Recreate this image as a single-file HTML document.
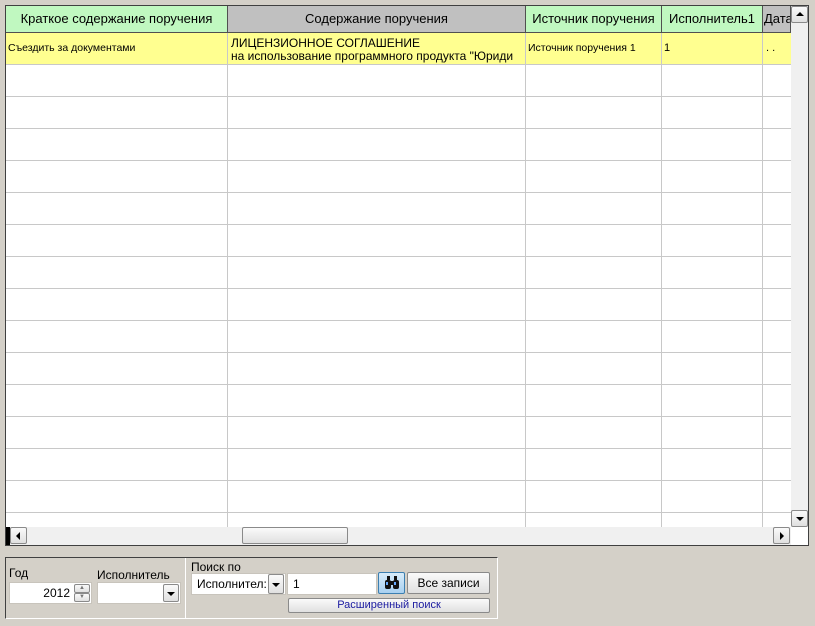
<!DOCTYPE html>
<html><head><meta charset="utf-8"><style>
*{margin:0;padding:0;box-sizing:border-box}
body{width:815px;height:626px;background:#d4d0c8;position:relative;overflow:hidden;font-family:"Liberation Sans",sans-serif;font-size:12px;color:#000}
.a{position:absolute}
.hd{position:absolute;top:6px;height:27px;border-right:1px solid #505050;border-bottom:1px solid #505050;text-align:center;line-height:26px;font-size:13px;white-space:nowrap;overflow:hidden}
.g{background:#c0f8c0}.gr{background:#c0c0c0}
.vl{position:absolute;top:33px;height:494px;width:1px;background:#c8c8c8}
.hl{position:absolute;left:6px;width:785px;height:1px;background:#c8c8c8}
.btn{position:absolute;background:linear-gradient(#fafafa,#e0e0e0);border:1px solid #8a8a8a;border-radius:2px;text-align:center}
.inp{position:absolute;background:#fff;border:1px solid #c8c4bc}
.tri{position:absolute;width:0;height:0}
</style></head><body>
<div class="a" style="left:5px;top:5px;width:804px;height:541px;border:1px solid #404040;background:#fff"></div>
<div class="hd g" style="left:6px;width:222px">Краткое содержание поручения</div>
<div class="hd gr" style="left:228px;width:298px">Содержание поручения</div>
<div class="hd g" style="left:526px;width:136px">Источник поручения</div>
<div class="hd g" style="left:662px;width:101px">Исполнитель1</div>
<div class="hd gr" style="left:763px;width:28px;text-align:left;padding-left:1px">Дата</div>
<div class="a" style="left:6px;top:33px;width:785px;height:31px;background:#ffff90"></div>
<div class="vl" style="left:227px"></div><div class="vl" style="left:525px"></div><div class="vl" style="left:661px"></div><div class="vl" style="left:762px"></div>
<div class="hl" style="top:64px"></div><div class="hl" style="top:96px"></div><div class="hl" style="top:128px"></div><div class="hl" style="top:160px"></div><div class="hl" style="top:192px"></div><div class="hl" style="top:224px"></div><div class="hl" style="top:256px"></div><div class="hl" style="top:288px"></div><div class="hl" style="top:320px"></div><div class="hl" style="top:352px"></div><div class="hl" style="top:384px"></div><div class="hl" style="top:416px"></div><div class="hl" style="top:448px"></div><div class="hl" style="top:480px"></div><div class="hl" style="top:512px"></div>
<div class="a" style="left:8px;top:42px;font-size:10.5px">Съездить за документами</div>
<div class="a" style="left:231px;top:37px;width:293px;height:26px;overflow:hidden;line-height:13px;white-space:nowrap">ЛИЦЕНЗИОННОЕ СОГЛАШЕНИЕ<br>на использование программного продукта "Юриди</div>
<div class="a" style="left:528px;top:42px;font-size:10.5px">Источник поручения 1</div>
<div class="a" style="left:664px;top:42px;font-size:11px">1</div>
<div class="a" style="left:766px;top:42px;font-size:11px">. .</div>
<!-- vscroll -->
<div class="a" style="left:791px;top:6px;width:17px;height:521px;background:#f0f0f0"></div>
<div class="btn" style="left:791px;top:6px;width:17px;height:17px"></div>
<div class="tri" style="left:796px;top:12px;border-left:4px solid transparent;border-right:4px solid transparent;border-bottom:4px solid #000"></div>
<div class="btn" style="left:791px;top:510px;width:17px;height:17px"></div>
<div class="tri" style="left:796px;top:517px;border-left:4px solid transparent;border-right:4px solid transparent;border-top:4px solid #000"></div>
<!-- hscroll -->
<div class="a" style="left:6px;top:527px;width:785px;height:18px;background:#f0f0f0"></div>
<div class="a" style="left:6px;top:527px;width:4px;height:18px;background:#000"></div>
<div class="btn" style="left:10px;top:527px;width:17px;height:17px"></div>
<div class="tri" style="left:16px;top:532px;border-top:4px solid transparent;border-bottom:4px solid transparent;border-right:4px solid #000"></div>
<div class="btn" style="left:242px;top:527px;width:106px;height:17px"></div>
<div class="btn" style="left:773px;top:527px;width:17px;height:17px"></div>
<div class="tri" style="left:780px;top:532px;border-top:4px solid transparent;border-bottom:4px solid transparent;border-left:4px solid #000"></div>
<!-- bottom panel -->
<div class="a" style="left:5px;top:557px;width:493px;height:62px;border:1px solid #404040;border-right-color:#fff;border-bottom-color:#fff"></div>
<div class="a" style="left:185px;top:558px;width:1px;height:60px;background:#fff"></div>
<div class="a" style="left:9px;top:566px">Год</div>
<div class="a" style="left:97px;top:568px">Исполнитель</div>
<div class="inp" style="left:9px;top:582px;width:83px;height:22px;text-align:right;padding-right:21px;line-height:20px">2012</div>
<div class="btn" style="left:74px;top:584px;width:16px;height:9px;font-size:6px;line-height:7px;color:#777">▲</div>
<div class="btn" style="left:74px;top:593px;width:16px;height:9px;font-size:6px;line-height:7px;color:#777">▼</div>
<div class="inp" style="left:97px;top:582px;width:84px;height:22px"></div>
<div class="btn" style="left:163px;top:584px;width:16px;height:18px"></div>
<div class="tri" style="left:167px;top:592px;border-left:4px solid transparent;border-right:4px solid transparent;border-top:4px solid #000"></div>
<div class="a" style="left:191px;top:560px">Поиск по</div>
<div class="inp" style="left:191px;top:573px;width:95px;height:22px;padding-left:5px;line-height:20px;overflow:hidden;white-space:nowrap">Исполнител:</div>
<div class="btn" style="left:268px;top:574px;width:16px;height:20px"></div>
<div class="tri" style="left:272px;top:583px;border-left:4px solid transparent;border-right:4px solid transparent;border-top:4px solid #000"></div>
<div class="inp" style="left:287px;top:573px;width:90px;height:22px;padding-left:5px;line-height:20px">1</div>
<div class="btn" style="left:378px;top:572px;width:27px;height:22px;background:linear-gradient(#d8ecfa,#a8d0f0);border-color:#3c7fb1"></div>
<svg class="a" style="left:384px;top:576px" width="16" height="14" viewBox="0 0 16 14"><rect x="3" y="0" width="3" height="4" fill="#111"/><rect x="10" y="0" width="3" height="4" fill="#111"/><rect x="1" y="4" width="6" height="9" rx="2" fill="#111"/><rect x="9" y="4" width="6" height="9" rx="2" fill="#111"/><rect x="6" y="5" width="4" height="4" fill="#111"/><rect x="2" y="6" width="2" height="3" fill="#6af"/><rect x="10" y="6" width="2" height="3" fill="#6af"/></svg>
<div class="btn" style="left:407px;top:572px;width:83px;height:22px;line-height:20px">Все записи</div>
<div class="btn" style="left:288px;top:598px;width:202px;height:15px;line-height:13px;font-size:11px;color:#1a1aa0">Расширенный поиск</div>
</body></html>
